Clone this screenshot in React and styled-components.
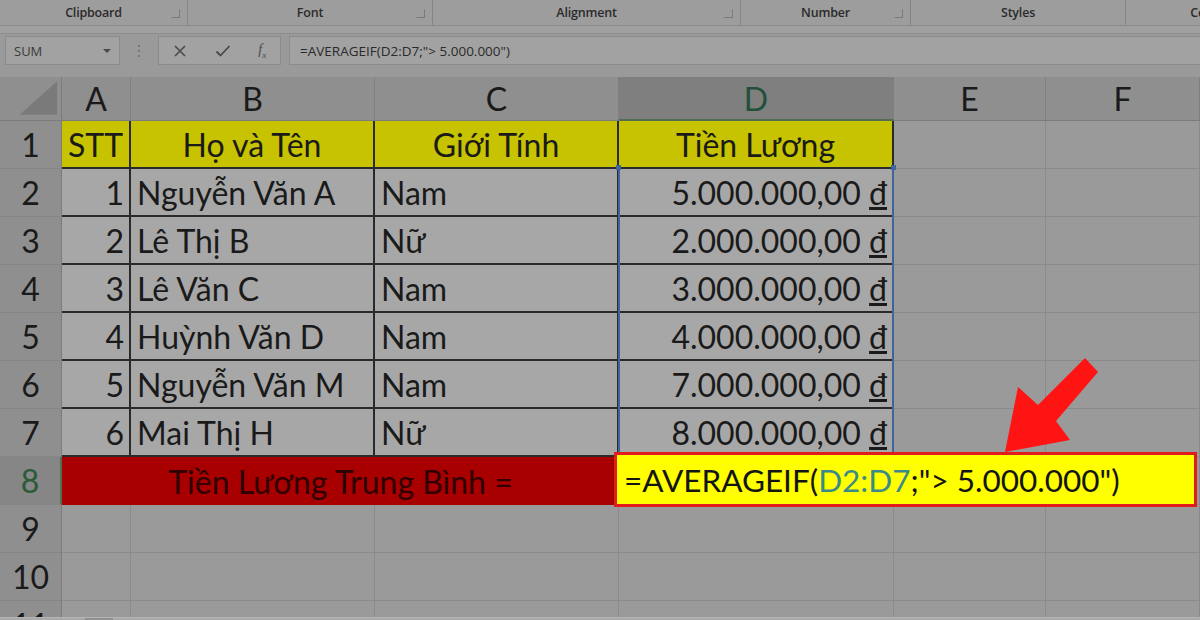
import React from 'react';
import styled, { createGlobalStyle, css } from 'styled-components';

const GlobalStyle = createGlobalStyle`
  html, body {
    margin: 0;
    padding: 0;
    background: #979797;
    overflow: hidden;
  }
`;

const Page = styled.div`
  position: relative;
  width: 1200px;
  height: 620px;
  overflow: hidden;
  background: #9a9a9a;
  display: flex;
  flex-direction: column;
  font-family: 'Open Sans', 'Noto Sans', sans-serif;
  & > * {
    flex: none;
  }
`;

const Ribbon = styled.div`
  display: flex;
  height: 25px;
  border-bottom: 1px solid #8a8a8a;
  background: #9d9d9d;
`;

const Group = styled.div`
  position: relative;
  width: ${(p) => p.w}px;
  flex: none;
  display: flex;
  align-items: center;
  justify-content: ${(p) => (p.end ? 'flex-end' : 'center')};
  border-right: ${(p) => (p.last ? 'none' : '1px solid #858585')};
  font-size: 12.5px;
  font-weight: 600;
  color: #2b2b2b;
  letter-spacing: -0.2px;
`;

const Launcher = styled.span`
  position: absolute;
  right: 7px;
  top: 9px;
  width: 7px;
  height: 7px;
  border: 1px solid #7a7a7a;
  border-top-color: transparent;
  border-left-color: transparent;
`;

const Band = styled.div`
  height: 7px;
  background: #a0a0a0;
  border-bottom: 1px solid #8c8c8c;
`;

const FormulaBar = styled.div`
  display: flex;
  align-items: center;
  height: 33px;
  padding: 0 0 0 5px;
  gap: 8px;
  background: #9a9a9a;
`;

const NameBox = styled.div`
  width: 115px;
  height: 29px;
  box-sizing: border-box;
  border: 1px solid #8b8b8b;
  background: #a2a2a2;
  display: flex;
  align-items: center;
  justify-content: space-between;
  padding: 0 8px 0 8px;
  font-size: 13px;
  color: #3a3a3a;
`;

const Caret = styled.span`
  width: 0;
  height: 0;
  border-left: 4px solid transparent;
  border-right: 4px solid transparent;
  border-top: 4px solid #4a4a4a;
`;

const Dots = styled.div`
  width: 22px;
  display: flex;
  flex-direction: column;
  align-items: center;
  gap: 3px;
  span {
    width: 2px;
    height: 2px;
    background: #777;
  }
`;

const Buttons = styled.div`
  width: 123px;
  height: 29px;
  box-sizing: border-box;
  border: 1px solid #8b8b8b;
  background: #a2a2a2;
  display: flex;
  align-items: center;
  justify-content: space-around;
  color: #454545;
`;

const Fx = styled.span`
  font-family: 'Liberation Serif', serif;
  font-style: italic;
  font-size: 14px;
  color: #4a4a4a;
  sub {
    font-size: 9px;
  }
`;

const FormulaInput = styled.div`
  flex: 1;
  height: 29px;
  box-sizing: border-box;
  border: 1px solid #8b8b8b;
  border-right: none;
  background: #a2a2a2;
  display: flex;
  align-items: center;
  padding-left: 10px;
  font-size: 13.5px;
  color: #2a2a2a;
`;

const SheetViewport = styled.div`
  margin-top: 10px;
  height: 540px;
  overflow: hidden;
`;

const Sheet = styled.div`
  display: grid;
  grid-template-columns: 62px 69px 244px 244px 275px 152px 154px;
  grid-template-rows: 44px repeat(11, 48px);
  font-family: Lato, 'Noto Sans', sans-serif;
  font-size: 32px;
  color: #1a1a1a;
`;

const TabBar = styled.div`
  height: 3px;
  display: flex;
  background: #a9a9a9;
  border-top: 1px solid #b4b4b4;
`;

const TabGap = styled.span`
  width: 28px;
  margin-left: 85px;
  background: #8f8f8f;
`;

const variants = {
  corner: css`
    background: #8f8f8f;
    border-right: 1px solid #7c7c7c;
    border-bottom: 1px solid #7c7c7c;
  `,
  colHead: css`
    background: #8f8f8f;
    border-right: 1px solid #7f7f7f;
    border-bottom: 1px solid #7c7c7c;
    justify-content: center;
  `,
  colHeadActive: css`
    background: #7f7f7f;
    border-right: 1px solid #7f7f7f;
    border-bottom: 2px solid #4f6f50;
    justify-content: center;
    color: #22503a;
  `,
  rowHead: css`
    background: #8f8f8f;
    border-right: 1px solid #7c7c7c;
    border-bottom: 1px solid #858585;
    justify-content: center;
  `,
  rowHeadActive: css`
    background: #868686;
    border-right: 2px solid #4f6f50;
    border-bottom: 1px solid #858585;
    justify-content: center;
    color: #2a5a38;
  `,
  title: css`
    background: #c7c300;
    border-right: 2px solid #2a2a2a;
    border-bottom: 2px solid #2a2a2a;
    justify-content: center;
  `,
  data: css`
    background: #a7a7a7;
    border-right: 2px solid #2a2a2a;
    border-bottom: 2px solid #2a2a2a;
  `,
  total: css`
    background: #a80000;
    justify-content: center;
    color: #2e0000;
  `,
  empty: css`
    background: #9a9a9a;
    border-right: 1px solid #8a8a8a;
    border-bottom: 1px solid #8a8a8a;
  `,
};

const Cell = styled.div`
  grid-row: ${(p) => p.r};
  grid-column: ${(p) => (p.span ? `${p.c} / span ${p.span}` : p.c)};
  box-sizing: border-box;
  display: flex;
  align-items: center;
  overflow: hidden;
  white-space: nowrap;
  padding: ${(p) => (p.align === 'right' ? '0 5px 0 0' : p.align === 'left' ? '0 0 0 6px' : '0')};
  justify-content: ${(p) => (p.align === 'right' ? 'flex-end' : 'flex-start')};
  ${(p) => variants[p.v]}
`;

const Selection = styled.div`
  grid-column: 5;
  grid-row: 3 / 9;
  margin-left: -1px;
  margin-top: -2px;
  border-left: 2px solid #41649a;
  border-right: 2px solid #41649a;
  pointer-events: none;
  position: relative;
  &::before,
  &::after {
    content: '';
    position: absolute;
    top: -2px;
    width: 5px;
    height: 5px;
    background: #41649a;
  }
  &::before {
    left: -4px;
  }
  &::after {
    right: -4px;
  }
`;

const FormulaBox = styled.div`
  grid-column: 5 / 8;
  grid-row: 9;
  margin: -5px 3px -2px -5px;
  box-sizing: border-box;
  border: 3px solid #e21b1b;
  background: #ffff00;
  display: flex;
  align-items: center;
  padding-left: 7px;
  color: #141414;
  font-size: 31.5px;
  z-index: 2;
`;

const Ref = styled.span`
  color: #3b8a8a;
`;

const Corner = () => (
  <svg width="62" height="43" viewBox="0 0 62 43">
    <polygon points="20,38 58,38 58,4" fill="#7a7a7a" />
  </svg>
);

const Arrow = styled.svg`
  position: absolute;
  left: 0;
  top: 0;
  pointer-events: none;
  z-index: 3;
`;

const rows = [
  ['1', 'Nguyễn Văn A', 'Nam', '5.000.000,00'],
  ['2', 'Lê Thị B', 'Nữ', '2.000.000,00'],
  ['3', 'Lê Văn C', 'Nam', '3.000.000,00'],
  ['4', 'Huỳnh Văn D', 'Nam', '4.000.000,00'],
  ['5', 'Nguyễn Văn M', 'Nam', '7.000.000,00'],
  ['6', 'Mai Thị H', 'Nữ', '8.000.000,00'],
];

const cols = ['A', 'B', 'C', 'D', 'E', 'F'];

export default function App() {
  return (
    <>
      <GlobalStyle />
      <Page>
        <Ribbon>
          <Group w={187}>Clipboard<Launcher /></Group>
          <Group w={244}>Font<Launcher /></Group>
          <Group w={307}>Alignment<Launcher /></Group>
          <Group w={169}>Number<Launcher /></Group>
          <Group w={214}>Styles</Group>
          <Group w={79} last end>Ce</Group>
        </Ribbon>
        <Band />
        <FormulaBar>
          <NameBox>
            SUM
            <Caret />
          </NameBox>
          <Dots>
            <span />
            <span />
            <span />
          </Dots>
          <Buttons>
            <svg width="14" height="14" viewBox="0 0 14 14">
              <path d="M2 2 L12 12 M12 2 L2 12" stroke="#4a4a4a" strokeWidth="1.6" />
            </svg>
            <svg width="16" height="14" viewBox="0 0 16 14">
              <path d="M1.5 7.5 L5.5 11.5 L14.5 2" stroke="#4a4a4a" strokeWidth="1.8" fill="none" />
            </svg>
            <Fx>
              f<sub>x</sub>
            </Fx>
          </Buttons>
          <FormulaInput>=AVERAGEIF(D2:D7;"&gt; 5.000.000")</FormulaInput>
        </FormulaBar>
        <SheetViewport>
          <Sheet>
            <Cell r={1} c={1} v="corner">
              <Corner />
            </Cell>
            {cols.map((col, j) => (
              <Cell key={col} r={1} c={j + 2} v={col === 'D' ? 'colHeadActive' : 'colHead'}>
                {col}
              </Cell>
            ))}

            <Cell r={2} c={1} v="rowHead">1</Cell>
            <Cell r={2} c={2} v="title">STT</Cell>
            <Cell r={2} c={3} v="title">Họ và Tên</Cell>
            <Cell r={2} c={4} v="title">Giới Tính</Cell>
            <Cell r={2} c={5} v="title">Tiền Lương</Cell>
            <Cell r={2} c={6} v="empty" />
            <Cell r={2} c={7} v="empty" />

            {rows.map((row, i) => (
              <React.Fragment key={row[0]}>
                <Cell r={i + 3} c={1} v="rowHead">{i + 2}</Cell>
                <Cell r={i + 3} c={2} v="data" align="right">{row[0]}</Cell>
                <Cell r={i + 3} c={3} v="data" align="left">{row[1]}</Cell>
                <Cell r={i + 3} c={4} v="data" align="left">{row[2]}</Cell>
                <Cell r={i + 3} c={5} v="data" align="right">
                  {row[3]}&nbsp;<u>đ</u>
                </Cell>
                <Cell r={i + 3} c={6} v="empty" />
                <Cell r={i + 3} c={7} v="empty" />
              </React.Fragment>
            ))}

            <Cell r={9} c={1} v="rowHeadActive">8</Cell>
            <Cell r={9} c={2} span={3} v="total">Tiền Lương Trung Bình =</Cell>
            <Cell r={9} c={5} v="empty" />
            <Cell r={9} c={6} v="empty" />
            <Cell r={9} c={7} v="empty" />

            {[9, 10, 11].map((n) => (
              <React.Fragment key={n}>
                <Cell r={n + 1} c={1} v="rowHead">{n}</Cell>
                {cols.map((col, j) => (
                  <Cell key={col} r={n + 1} c={j + 2} v="empty" />
                ))}
              </React.Fragment>
            ))}

            <Selection />
            <FormulaBox>
              =AVERAGEIF(<Ref>D2:D7</Ref>;"&gt; 5.000.000")
            </FormulaBox>
          </Sheet>
        </SheetViewport>
        <TabBar>
          <TabGap />
        </TabBar>
        <Arrow width="1200" height="620" viewBox="0 0 1200 620">
          <polygon
            points="1085,358 1098,372 1056,421 1070,440 1005,452 1018,387 1038,405"
            fill="#ff1414"
          />
        </Arrow>
      </Page>
    </>
  );
}
